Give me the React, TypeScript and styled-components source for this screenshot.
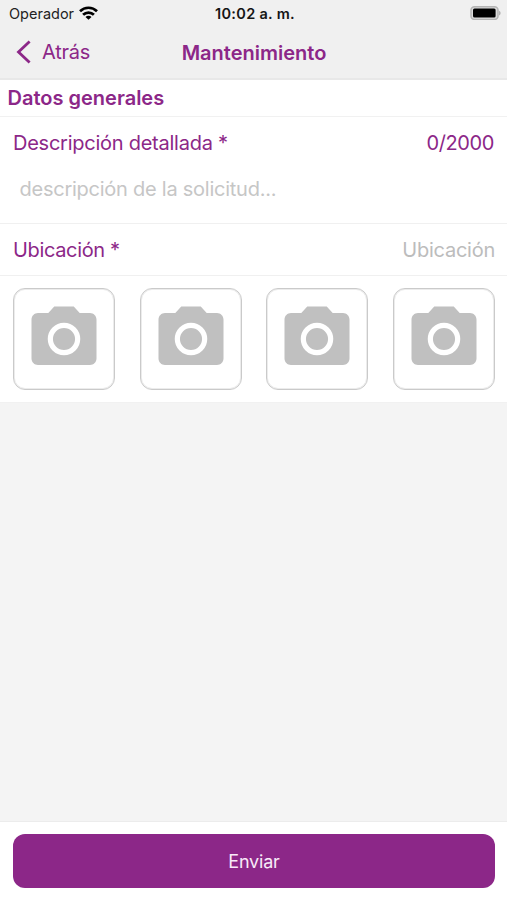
import React from 'react';
import styled, { createGlobalStyle } from 'styled-components';

const PURPLE = '#8c2788';

const GlobalStyle = createGlobalStyle`
  * { box-sizing: border-box; }
  body { margin: 0; font-family: Inter, "Liberation Sans", sans-serif; }
`;

const Screen = styled.div`
  width: 507px;
  height: 900px;
  display: flex;
  flex-direction: column;
  background: #f4f4f4;
  overflow: hidden;
`;

const Header = styled.header`
  height: 80px;
  background: #f0f0f0;
  border-bottom: 2px solid #e8e8e8;
`;

const StatusBar = styled.div`
  height: 27px;
  display: grid;
  grid-template-columns: 1fr auto 1fr;
  align-items: center;
  padding: 0 6px 0 9px;
  color: #151515;
`;

const Carrier = styled.div`
  display: flex;
  align-items: center;
  gap: 5px;
`;

const Wifi = styled.svg`
  margin-bottom: 2px;
`;

const Battery = styled.svg`
  justify-self: end;
  margin-bottom: 1px;
`;

const NavBar = styled.nav`
  height: 51px;
  display: grid;
  grid-template-columns: 1fr auto 1fr;
  align-items: center;
  padding: 0 15px 0 16px;
`;

const BackButton = styled.button`
  display: flex;
  align-items: center;
  gap: 11px;
  justify-self: start;
  padding: 0 0 2px;
  border: 0;
  background: none;
  font-family: inherit;
`;

const Label = styled.span<{ $size?: number; $weight?: number; $spacing?: number; $color?: string }>`
  font-size: ${(p) => p.$size ?? 20}px;
  font-weight: ${(p) => p.$weight ?? 400};
  letter-spacing: ${(p) => p.$spacing ?? -0.25}px;
  color: ${(p) => p.$color ?? PURPLE};
  line-height: 24px;
  white-space: nowrap;
`;

const SectionTitle = styled.div`
  height: 37px;
  display: flex;
  align-items: center;
  padding: 0 7.5px;
  background: #fff;
  border-bottom: 1px solid #f1f1f1;
`;

const Description = styled.section`
  height: 107px;
  padding: 14px 13px 0;
  background: #fff;
  border-bottom: 1px solid #f0f0f0;
`;

const Row = styled.div`
  display: flex;
  justify-content: space-between;
`;

const Placeholder = styled.div`
  display: flex;
  padding: 22px 6.5px 0;
`;

const LocationRow = styled(Row)`
  height: 52px;
  align-items: center;
  padding: 1px 12px 0 13px;
  background: #fff;
  border-bottom: 1px solid #f0f0f0;
`;

const Photos = styled.section`
  height: 127px;
  display: flex;
  justify-content: space-between;
  padding: 12px 12px 0 13px;
  background: #fff;
  border-bottom: 1px solid #f1f1f1;
`;

const PhotoButton = styled.button`
  width: 102px;
  height: 102px;
  display: flex;
  align-items: center;
  justify-content: center;
  padding: 0;
  border: 1px solid #cacaca;
  border-radius: 12px;
  background: #fff;
  box-shadow: inset 0 0 0 1px #ececec;
`;

const Footer = styled.footer`
  height: 79px;
  margin-top: auto;
  padding: 12px 12px 0 13px;
  background: #fff;
  border-top: 1px solid #ececec;
`;

const SubmitButton = styled.button`
  width: 100%;
  height: 54px;
  display: flex;
  align-items: center;
  justify-content: center;
  padding: 1px 0 0;
  border: 0;
  border-radius: 12px;
  background: ${PURPLE};
  font-family: inherit;
`;

const WifiIcon = () => (
  <Wifi width="19" height="14" viewBox="0 0 19 14">
    <g fill="none" stroke="#000" strokeWidth="2.7">
      <path d="M1 5.2a12.2 12.2 0 0 1 17 0" />
      <path d="M4.1 8.8a7.6 7.6 0 0 1 10.8 0" />
    </g>
    <path d="M9.5 13.8 6.5 10.9a4.2 4.2 0 0 1 6 0z" />
  </Wifi>
);

const BatteryIcon = () => (
  <Battery width="31" height="14" viewBox="0 0 31 14">
    <rect x="1" y="0.8" width="27" height="12.6" rx="3.5" fill="#dcdcdc" stroke="#b4b4b4" strokeWidth="1.5" />
    <rect x="3" y="2.6" width="22.6" height="9" rx="1.5" fill="#000" />
    <path d="M29 4.7c2.2.8 2.2 4 0 4.8z" fill="#b4b4b4" />
  </Battery>
);

const CameraIcon = () => (
  <svg width="78" height="78" viewBox="0 0 24 24" fill="#c0c0c0">
    <path d="M9 2 7.17 4H4c-1.1 0-2 .9-2 2v12c0 1.1.9 2 2 2h16c1.1 0 2-.9 2-2V6c0-1.1-.9-2-2-2h-3.17L15 2H9z" />
    <circle cx="12" cy="12" r="4.2" stroke="#fff" strokeWidth="1.6" />
  </svg>
);

export default function App() {
  return (
    <Screen>
      <GlobalStyle />
      <Header>
        <StatusBar>
          <Carrier>
            <Label $size={14.5} $spacing={0} $color="#222">Operador</Label>
            <WifiIcon />
          </Carrier>
          <Label $size={14.5} $weight={600} $spacing={0.3} $color="#151515">10:02 a. m.</Label>
          <BatteryIcon />
        </StatusBar>
        <NavBar>
          <BackButton>
            <svg width="15" height="24" viewBox="0 0 15 24" fill="none" stroke={PURPLE} strokeWidth="2.8">
              <path d="M13.6 1.5 2.5 12l11.1 10.5" />
            </svg>
            <Label>Atrás</Label>
          </BackButton>
          <Label $weight={600} $spacing={0}>Mantenimiento</Label>
        </NavBar>
      </Header>
      <SectionTitle>
        <Label $weight={600} $spacing={0}>Datos generales</Label>
      </SectionTitle>
      <Description>
        <Row>
          <Label>Descripción detallada *</Label>
          <Label $spacing={-0.4}>0/2000</Label>
        </Row>
        <Placeholder>
          <Label $color="#c6c6c6">descripción de la solicitud...</Label>
        </Placeholder>
      </Description>
      <LocationRow>
        <Label $spacing={-0.35}>Ubicación *</Label>
        <Label $color="#bcbcbc">Ubicación</Label>
      </LocationRow>
      <Photos>
        {[0, 1, 2, 3].map((slot) => (
          <PhotoButton key={slot} aria-label={`Foto ${slot + 1}`}>
            <CameraIcon />
          </PhotoButton>
        ))}
      </Photos>
      <Footer>
        <SubmitButton>
          <Label $size={18} $spacing={-0.2} $color="#f8eaf8">Enviar</Label>
        </SubmitButton>
      </Footer>
    </Screen>
  );
}
